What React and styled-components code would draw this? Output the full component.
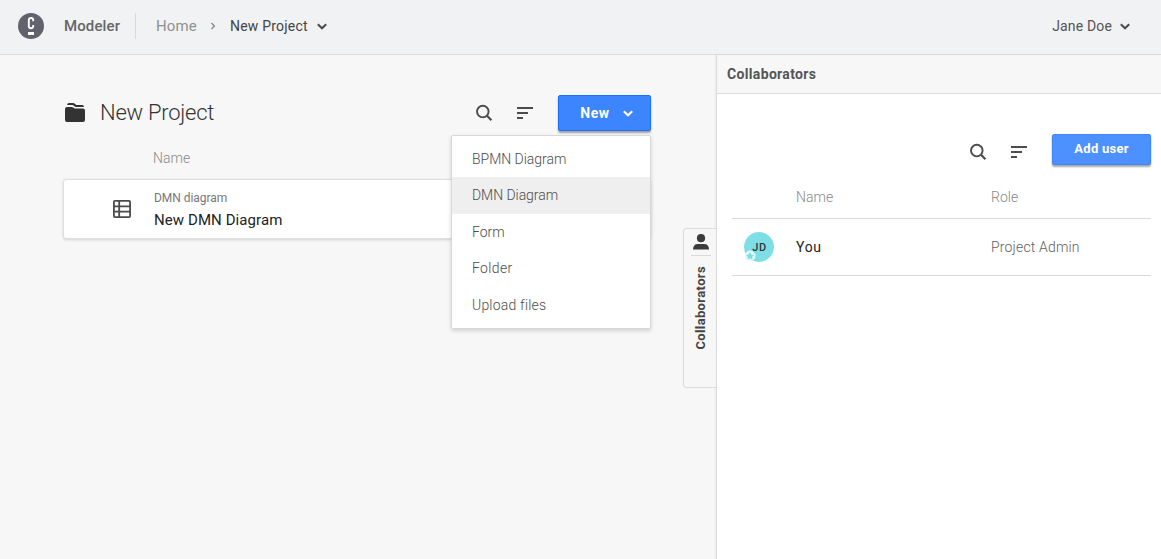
import React from "react";
import styled, { createGlobalStyle } from "styled-components";

const Global = createGlobalStyle`
  * { box-sizing: border-box; }
  body {
    margin: 0;
    background: #f7f7f7;
    color: #333;
    font-family: Roboto, "Liberation Sans", sans-serif;
    font-size: 14px;
    overflow: hidden;
  }
  button { font-family: inherit; border: 0; background: none; padding: 0; cursor: pointer; }
  svg { display: block; flex: none; }
`;

const Page = styled.div`
  height: 559px;
  width: 1161px;
  display: flex;
  flex-direction: column;
`;

const Header = styled.header`
  height: 55px;
  flex: none;
  display: flex;
  align-items: center;
  padding: 0 30px 2px 18px;
  background: #f1f2f4;
  border-bottom: 1px solid #dcdcdc;
`;

const AppName = styled.span`
  margin-left: 20px;
  width: 71px;
  font-size: 15px;
  font-weight: 500;
  line-height: 20px;
  letter-spacing: 0.12px;
  color: #666;
  white-space: nowrap;
`;

const Divider = styled.i`
  width: 1px;
  height: 26px;
  background: #d8d9db;
`;

const Crumb = styled.span`
  margin-left: 20px;
  width: 54px;
  font-size: 15px;
  line-height: 20px;
  letter-spacing: 0.15px;
  color: #909090;
`;

const Dropdown = styled.button`
  display: flex;
  align-items: center;
  gap: ${(p) => (p.$end ? "7px" : "8px")};
  margin-left: ${(p) => (p.$end ? "auto" : "14px")};
  font-size: 14px;
  line-height: 20px;
  letter-spacing: ${(p) => p.$track};
  color: ${(p) => (p.$end ? "#555" : "#444")};
`;

const Body = styled.div`
  flex: 1;
  display: flex;
  min-height: 0;
`;

const Main = styled.main`
  position: relative;
  width: 716px;
  padding: 40px 65px 0 63px;
`;

const TitleRow = styled.div`
  position: relative;
  display: flex;
  align-items: center;
  height: 36px;
  padding-left: 1px;
`;

const Title = styled.h1`
  margin: 0 auto 0 14px;
  font-size: 22px;
  font-weight: 300;
  line-height: 30px;
  letter-spacing: -0.25px;
  color: #333;
`;

const Tools = styled.div`
  display: flex;
  align-items: center;
  gap: 23px;
  margin-right: 24px;
`;

const Primary = styled.button`
  display: flex;
  align-items: center;
  justify-content: center;
  gap: 12px;
  width: ${(p) => p.$width};
  height: ${(p) => p.$height};
  padding: ${(p) => (p.$open ? "0 0 0 5px" : "0 0 2px")};
  border: 1px solid ${(p) => (p.$open ? "#1a70ff" : "#3c85ff")};
  border-radius: 2px;
  background: ${(p) => (p.$open ? "#3c85ff" : "#4d90ff")};
  box-shadow: 0 2px 2px rgba(0, 0, 0, 0.35);
  color: #fff;
  font-size: ${(p) => p.$size};
  font-weight: 700;
  letter-spacing: ${(p) => p.$track};
`;

const Menu = styled.ul`
  position: absolute;
  z-index: 2;
  top: 40px;
  right: 0;
  width: 200px;
  height: 194px;
  margin: 0;
  padding: 4.5px 0;
  list-style: none;
  background: #fff;
  border: 1px solid #d8d8d8;
  border-radius: 2px;
  box-shadow: 0 2px 4px rgba(0, 0, 0, 0.15);
`;

const MenuItem = styled.li`
  height: 36.5px;
  padding-left: 20px;
  line-height: 36.5px;
  font-size: 14px;
  letter-spacing: ${(p) => p.$track};
  color: #4c4c4c;
  font-weight: 300;
  background: ${(p) => (p.$active ? "#efefef" : "transparent")};
`;

const ListHeading = styled.div`
  margin: 17px 0 11px 90px;
  height: 20px;
  line-height: 20px;
  font-weight: 300;
  letter-spacing: 0.05px;
  color: #888;
`;

const FileRow = styled.div`
  display: flex;
  align-items: center;
  height: 60px;
  padding-left: 48px;
  gap: 22px;
  background: #fff;
  border: 1px solid #dedede;
  border-radius: 3px;
  box-shadow: 0 1px 3px rgba(0, 0, 0, 0.14);
`;

const FileKind = styled.div`
  font-size: 12px;
  line-height: 20px;
  letter-spacing: -0.05px;
  color: #777;
`;

const FileName = styled.div`
  font-size: 15px;
  line-height: 24px;
  margin-bottom: -2px;
  letter-spacing: 0.08px;
  color: #222;
`;

const SideTab = styled.button`
  position: absolute;
  top: 173px;
  right: -1px;
  width: 34px;
  height: 160px;
  display: flex;
  flex-direction: column;
  align-items: center;
  padding: 5px 0 0 2px;
  background: #f7f7f7;
  border: 1px solid #dadada;
  border-radius: 3px 0 0 3px;
`;

const TabRule = styled.i`
  width: 20px;
  height: 1px;
  margin: 5px 0 10px;
  background: #dadada;
`;

const TabLabel = styled.span`
  writing-mode: vertical-rl;
  transform: rotate(180deg);
  font-size: 13px;
  font-weight: 700;
  line-height: 16px;
  letter-spacing: 0.36px;
  color: #444;
`;

const Panel = styled.aside`
  flex: 1;
  background: #fff;
  border-left: 1px solid #dadada;
  box-shadow: -1px 0 2px rgba(0, 0, 0, 0.05);
`;

const PanelTitle = styled.h2`
  margin: 0;
  height: 39px;
  padding-left: 10px;
  background: #f7f7f7;
  border-bottom: 1px solid #dadada;
  font-size: 14px;
  font-weight: 700;
  line-height: 38px;
  letter-spacing: 0.34px;
  color: #555;
`;

const PanelTools = styled.div`
  display: flex;
  justify-content: flex-end;
  height: 31px;
  margin: 40px 10px 0 0;
`;

const PanelIcons = styled(Tools)`
  padding-top: 5px;
`;

const UserRow = styled.div`
  display: grid;
  grid-template-columns: 64px 195px 1fr;
  align-items: center;
  height: ${(p) => (p.$head ? "54px" : "57px")};
  padding-top: ${(p) => (p.$head ? "10px" : "0")};
  margin: 0 10px 0 15px;
  border-bottom: 1px solid #dadada;
  line-height: 20px;
  font-weight: ${(p) => (p.$head ? 300 : 400)};
  color: #888;
  letter-spacing: 0.05px;
`;

const UserName = styled.span`
  color: #222;
  letter-spacing: 0.7px;
`;

const Role = styled.span`
  color: #606060;
  font-weight: 300;
  letter-spacing: 0.18px;
`;

const Avatar = styled.div`
  position: relative;
  width: 30px;
  height: 30px;
  margin-left: 12px;
  border-radius: 50%;
  background: #7ddfe5;
  color: #333;
  text-align: center;
  font-size: 11px;
  font-weight: 500;
  line-height: 32px;
  letter-spacing: 0.7px;
  padding-left: 1px;
`;

const Badge = styled.svg`
  position: absolute;
  left: 0;
  bottom: 0;
`;

const Logo = () => (
  <svg width="26" height="26" viewBox="0 0 26 26">
    <circle cx="13" cy="13" r="13" fill="#62626e" />
    <path d="M15.2 8.2V7.2Q15.2 5 13 5Q10.8 5 10.8 7.2V13Q10.8 15.2 13 15.2Q15.2 15.2 15.2 13V12" fill="none" stroke="#fff" strokeWidth="1.9" />
    <path d="M10 19h6v3h-6z" fill="#fff" />
  </svg>
);

const Chevron = ({ color = "#4c4c4c" }) => (
  <svg width="12" height="10" viewBox="0 0 12 10">
    <path d="M1.8 3.2L6 7.3L10.2 3.2" fill="none" stroke={color} strokeWidth="2.1" />
  </svg>
);

const CrumbArrow = () => (
  <svg width="6" height="8" viewBox="0 0 6 8">
    <path d="M1.5 1L4.4 4L1.5 7" fill="none" stroke="#888" strokeWidth="1.3" />
  </svg>
);

const Folder = () => (
  <svg width="22" height="20" viewBox="0 0 22 20" fill="#333">
    <path d="M3 2Q3.3 0 5 0H9.2Q10 0 10.8 .8L12.2 2H18Q20 2 20 4H11.5L9.2 2.2Q8.8 2 8 2Z" />
    <path d="M1 6Q1 4 3 4H7.5Q8.5 4 9.2 4.6L10.8 5.5H19Q21 5.5 21 7.5V17Q21 19 19 19H3Q1 19 1 17Z" />
  </svg>
);

const Search = () => (
  <svg width="18" height="18" viewBox="0 0 18 18" fill="none" stroke="#4c4c4c">
    <circle cx="7.8" cy="7.6" r="5.8" strokeWidth="1.9" />
    <path d="M12 11.8L16.4 16.2" strokeWidth="2.2" />
  </svg>
);

const Sort = () => (
  <svg width="18" height="14" viewBox="0 0 18 14" fill="#4c4c4c">
    <path d="M1 1h16v2H1zM1 6h11v2H1zM1 11h6v2H1z" />
  </svg>
);

const TableIcon = () => (
  <svg width="20" height="20" viewBox="0 0 20 20" fill="none" stroke="#4c4c4c" strokeWidth="1.8">
    <rect x="1.9" y="1.9" width="16.2" height="16.2" rx="1" />
    <path d="M2 7.3H18M2 12.7H18M7.2 2V18" />
  </svg>
);

const Person = () => (
  <svg width="16" height="16" viewBox="0 0 16 16" fill="#3c3c3c">
    <circle cx="8" cy="4.2" r="4.1" />
    <path d="M0 15.6Q0 10 5 10H11Q16 10 16 15.6Z" />
  </svg>
);

const items = [
  { label: "BPMN Diagram", track: "-0.03px" },
  { label: "DMN Diagram", track: "-0.05px", active: true },
  { label: "Form", track: "0" },
  { label: "Folder", track: "0.35px" },
  { label: "Upload files", track: "0.2px" },
];

export default function App() {
  return (
    <Page>
      <Global />
      <Header>
        <Logo />
        <AppName>Modeler</AppName>
        <Divider />
        <Crumb>Home</Crumb>
        <CrumbArrow />
        <Dropdown $track="0.2px">New Project<Chevron /></Dropdown>
        <Dropdown $end $track="0.15px">Jane Doe<Chevron /></Dropdown>
      </Header>
      <Body>
        <Main>
          <TitleRow>
            <Folder />
            <Title>New Project</Title>
            <Tools><Search /><Sort /></Tools>
            <Primary $open $width="93px" $height="36px" $size="14px" $track="0.6px">
              New<Chevron color="#fff" />
            </Primary>
            <Menu>
              {items.map((i) => (
                <MenuItem key={i.label} $active={i.active} $track={i.track}>{i.label}</MenuItem>
              ))}
            </Menu>
          </TitleRow>
          <ListHeading>Name</ListHeading>
          <FileRow>
            <TableIcon />
            <div>
              <FileKind>DMN diagram</FileKind>
              <FileName>New DMN Diagram</FileName>
            </div>
          </FileRow>
          <SideTab>
            <Person />
            <TabRule />
            <TabLabel>Collaborators</TabLabel>
          </SideTab>
        </Main>
        <Panel>
          <PanelTitle>Collaborators</PanelTitle>
          <PanelTools>
            <PanelIcons><Search /><Sort /></PanelIcons>
            <Primary $width="99px" $height="31px" $size="13px" $track="0.25px">Add user</Primary>
          </PanelTools>
          <UserRow $head><span /><span>Name</span><span>Role</span></UserRow>
          <UserRow>
            <Avatar>
              JD
              <Badge width="12" height="12" viewBox="0 0 12 12">
                <circle cx="6" cy="6" r="5" fill="#7ddfe5" stroke="#fff" strokeWidth="1" />
                <circle cx="6" cy="6" r="4.7" fill="#e9fafb" />
                <path d="M6 1.8L7.3 4.5L10.2 4.9L8.1 6.9L8.6 9.8L6 8.4L3.4 9.8L3.9 6.9L1.8 4.9L4.7 4.5Z" fill="#7ddfe5" />
              </Badge>
            </Avatar>
            <UserName>You</UserName>
            <Role>Project Admin</Role>
          </UserRow>
        </Panel>
      </Body>
    </Page>
  );
}
